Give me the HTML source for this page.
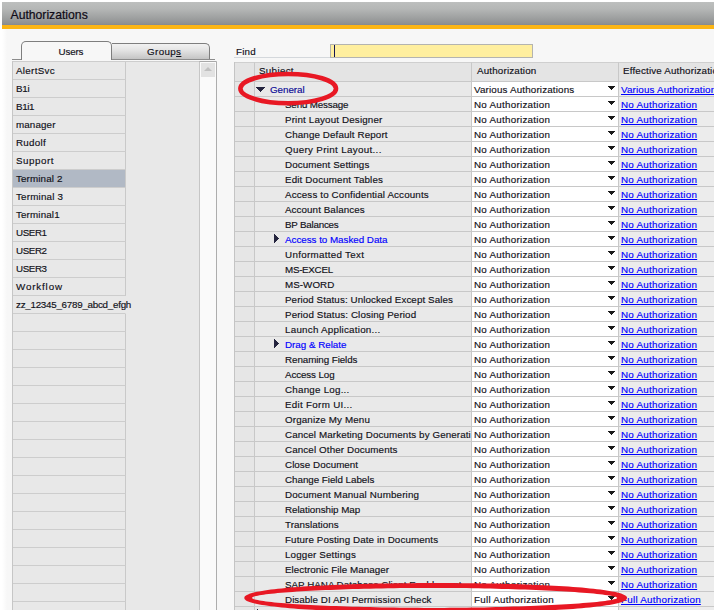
<!DOCTYPE html>
<html><head><meta charset="utf-8"><title>Authorizations</title>
<style>
html,body{margin:0;padding:0;}
body{width:714px;height:610px;overflow:hidden;background:#fff;position:relative;font-family:"Liberation Sans",sans-serif;font-size:9.8px;color:#101018;}
.abs{position:absolute;}
#win{left:2px;top:2px;width:712px;height:608px;background:#f7f7f7;}
#edge{left:2px;top:29px;width:5px;height:581px;background:linear-gradient(to right,#ffffff,#f7f7f7);}
#title{left:2px;top:2px;width:712px;height:23px;background:linear-gradient(to bottom,#bdbfbe 0%,#b5b7b6 30%,#9fa1a1 68%,#8e9091 94%,#848990 100%);}
#title span{position:absolute;left:8.5px;top:5.5px;font-size:12.2px;line-height:14px;color:#0e0a16;-webkit-text-stroke:0.2px;white-space:nowrap;}
#gold{left:2px;top:25px;width:712px;height:4px;background:#fbb515;}
.t{white-space:nowrap;-webkit-text-stroke:0.15px;}
/* tabs */
#tabline{left:12px;top:59px;width:203px;height:1px;background:#8c8c8c;}
#tab1{left:21px;top:41px;width:91px;height:19px;box-sizing:border-box;border:1px solid #7e7e7e;border-bottom:none;border-radius:5px 5px 0 0;background:#f7f7f7;}
#tab1 .t{position:absolute;left:36.5px;top:3px;line-height:13px;}
#tab2{left:112px;top:43px;width:98px;height:16px;box-sizing:border-box;border:1px solid #7e7e7e;border-bottom:none;border-left:none;border-radius:0 5px 0 0;background:linear-gradient(to bottom,#f2f2f2,#e2e2e2 45%,#c4c4c4);}
#tab2 .t{position:absolute;left:35px;top:1px;line-height:13px;}
/* list */
#list{left:12px;top:61px;width:205px;height:549px;box-sizing:border-box;border-left:1px solid #c6c6c6;border-right:1px solid #adadad;border-top:1px solid #cdcdcd;background:#e8e8e8;}
#lcol{left:0;top:0;width:113px;height:549px;}
.u{position:relative;height:17px;width:112px;border-bottom:1px solid #cdcdcd;border-right:1px solid #c9c9c9;line-height:17px;}
.u .t{position:absolute;left:3px;top:0;}
.u.sel{background:#b1b9c5;}
.u.zz{border-right-color:#e8e8e8;}
#track{left:186px;top:-1px;width:16px;height:549px;background:#fafafa;border-left:1px solid #c6c6c6;border-top:1px solid #a8a8a8;}
#sbtn{left:1px;top:1px;width:14px;height:14px;background:#e2e2e2;}
#sbtn:after{content:"";position:absolute;left:3px;top:4px;border-left:4px solid transparent;border-right:4px solid transparent;border-bottom:4px solid #c0c0c0;}
/* find */
#findl{left:236px;top:45px;line-height:13px;}
#findu{left:234px;top:57px;width:96px;height:1px;background:#d4d8dc;}
#findi{left:330px;top:44px;width:203px;height:14px;box-sizing:border-box;background:#ffef9f;border:1px solid #b4b4b0;}
#caret{left:334px;top:45px;width:1.2px;height:12px;background:#141450;}
/* grid */
#grid{left:234px;top:62px;width:480px;height:548px;overflow:hidden;background:#e9e9e9;border-left:1px solid #c4c4c4;box-sizing:border-box;}
.r{position:absolute;left:0;width:480px;height:15px;}
.c{position:absolute;top:0;height:14px;border-bottom:1px solid #c8c8c8;border-right:1px solid #c8c8c8;line-height:14px;overflow:hidden;box-sizing:content-box;}
.c0{left:0;width:19px;background:#e6e6e6;}
.c1{left:20px;width:216px;background:#e9e9e9;}
.c2{left:237px;width:146px;background:#fff;}
.c3{left:384px;width:100px;background:#ececec;border-right:none;}
.c1 .t{position:absolute;left:30px;top:1px;}
.c2 .t{position:absolute;left:2px;top:1px;}
.c3 .t{position:absolute;left:2px;top:1px;color:#0000ff;text-decoration:underline;}
.dd{position:absolute;left:136px;top:4px;width:7px;height:4px;display:block;}
.hd .c{height:18px;line-height:16px;background:#e4e4e4;border-top:1px solid #cfcfcf;}
.hd .c .t{position:absolute;top:0;}
.tri-r{position:absolute;left:19px;top:2px;width:5px;height:9px;display:block;}
.tri-d{position:absolute;left:1px;top:5px;width:9px;height:5px;display:block;}
</style></head><body>
<div id="win" class="abs"></div>
<div id="edge" class="abs"></div>
<div id="title" class="abs"><span>Authorizations</span></div>
<div id="gold" class="abs"></div>
<div id="tabline" class="abs"></div>
<div id="tab1" class="abs"><span class="t" style="letter-spacing:-0.148px;">Users</span></div>
<div id="tab2" class="abs"><span class="t" style="letter-spacing:0.372px">Group<u>s</u></span></div>
<div id="list" class="abs">
<div id="lcol" class="abs">
<div class="u"><span class="t" style="letter-spacing:0.317px;">AlertSvc</span></div>
<div class="u"><span class="t" style="letter-spacing:-0.186px;">B1i</span></div>
<div class="u"><span class="t" style="letter-spacing:-0.37px;">B1i1</span></div>
<div class="u"><span class="t" style="letter-spacing:0.121px;">manager</span></div>
<div class="u"><span class="t" style="letter-spacing:0.294px;">Rudolf</span></div>
<div class="u"><span class="t" style="letter-spacing:0.545px;">Support</span></div>
<div class="u sel"><span class="t" style="letter-spacing:0.133px;">Terminal 2</span></div>
<div class="u"><span class="t" style="letter-spacing:0.2px;">Terminal 3</span></div>
<div class="u"><span class="t" style="letter-spacing:0.139px;">Terminal1</span></div>
<div class="u"><span class="t" style="letter-spacing:-0.418px;">USER1</span></div>
<div class="u"><span class="t" style="letter-spacing:-0.418px;">USER2</span></div>
<div class="u"><span class="t" style="letter-spacing:-0.418px;">USER3</span></div>
<div class="u"><span class="t" style="letter-spacing:0.842px;">Workflow</span></div>
<div class="u zz"><span class="t" style="letter-spacing:-0.257px;">zz_12345_6789_abcd_efgh</span></div>
<div class="u"></div>
<div class="u"></div>
<div class="u"></div>
<div class="u"></div>
<div class="u"></div>
<div class="u"></div>
<div class="u"></div>
<div class="u"></div>
<div class="u"></div>
<div class="u"></div>
<div class="u"></div>
<div class="u"></div>
<div class="u"></div>
<div class="u"></div>
<div class="u"></div>
<div class="u"></div>
<div class="u"></div>
</div>
<div id="track" class="abs"><div id="sbtn" class="abs"></div></div>
</div>
<div id="findl" class="abs"><span class="t" style="letter-spacing:0.212px;">Find</span></div>
<div id="findu" class="abs"></div>
<div id="findi" class="abs"></div>
<div id="caret" class="abs"></div>
<div id="grid" class="abs">
<div class="r hd" style="top:0;height:20px"><div class="c c0"></div><div class="c c1"><span class="t" style="letter-spacing:0.319px;left:4px;">Subject</span></div><div class="c c2" style="background:#e4e4e4"><span class="t" style="letter-spacing:0.176px;left:5px;">Authorization</span></div><div class="c c3" style="background:#e4e4e4"><span class="t" style="letter-spacing:0.17px;left:4px;color:inherit;text-decoration:none;">Effective Authorization</span></div></div>
<div class="r" style="top:20px"><div class="c c0"></div><div class="c c1"><svg class="tri-d" viewBox="0 0 9 5"><polygon points="0,0 9,0 4.5,5" fill="#24243e" shape-rendering="crispEdges"/></svg><span class="t" style="letter-spacing:-0.027px;left:15px;color:#0a0a96;">General</span></div><div class="c c2"><span class="t" style="letter-spacing:0.164px;">Various Authorizations</span><svg class="dd" viewBox="0 0 7 4"><polygon points="0,0 7,0 3.5,4" fill="#1a1a1a" shape-rendering="crispEdges"/></svg></div><div class="c c3"><span class="t" style="letter-spacing:0.164px;">Various Authorizations</span></div></div>
<div class="r" style="top:35px"><div class="c c0"></div><div class="c c1"><span class="t" style="letter-spacing:-0.169px;">Send Message</span></div><div class="c c2"><span class="t" style="letter-spacing:0.267px;">No Authorization</span><svg class="dd" viewBox="0 0 7 4"><polygon points="0,0 7,0 3.5,4" fill="#1a1a1a" shape-rendering="crispEdges"/></svg></div><div class="c c3"><span class="t" style="letter-spacing:0.267px;">No Authorization</span></div></div>
<div class="r" style="top:50px"><div class="c c0"></div><div class="c c1"><span class="t" style="letter-spacing:0.154px;">Print Layout Designer</span></div><div class="c c2"><span class="t" style="letter-spacing:0.267px;">No Authorization</span><svg class="dd" viewBox="0 0 7 4"><polygon points="0,0 7,0 3.5,4" fill="#1a1a1a" shape-rendering="crispEdges"/></svg></div><div class="c c3"><span class="t" style="letter-spacing:0.267px;">No Authorization</span></div></div>
<div class="r" style="top:65px"><div class="c c0"></div><div class="c c1"><span class="t" style="letter-spacing:0.114px;">Change Default Report</span></div><div class="c c2"><span class="t" style="letter-spacing:0.267px;">No Authorization</span><svg class="dd" viewBox="0 0 7 4"><polygon points="0,0 7,0 3.5,4" fill="#1a1a1a" shape-rendering="crispEdges"/></svg></div><div class="c c3"><span class="t" style="letter-spacing:0.267px;">No Authorization</span></div></div>
<div class="r" style="top:80px"><div class="c c0"></div><div class="c c1"><span class="t" style="letter-spacing:0.327px;">Query Print Layout...</span></div><div class="c c2"><span class="t" style="letter-spacing:0.267px;">No Authorization</span><svg class="dd" viewBox="0 0 7 4"><polygon points="0,0 7,0 3.5,4" fill="#1a1a1a" shape-rendering="crispEdges"/></svg></div><div class="c c3"><span class="t" style="letter-spacing:0.267px;">No Authorization</span></div></div>
<div class="r" style="top:95px"><div class="c c0"></div><div class="c c1"><span class="t" style="letter-spacing:0.095px;">Document Settings</span></div><div class="c c2"><span class="t" style="letter-spacing:0.267px;">No Authorization</span><svg class="dd" viewBox="0 0 7 4"><polygon points="0,0 7,0 3.5,4" fill="#1a1a1a" shape-rendering="crispEdges"/></svg></div><div class="c c3"><span class="t" style="letter-spacing:0.267px;">No Authorization</span></div></div>
<div class="r" style="top:110px"><div class="c c0"></div><div class="c c1"><span class="t" style="letter-spacing:0.146px;">Edit Document Tables</span></div><div class="c c2"><span class="t" style="letter-spacing:0.267px;">No Authorization</span><svg class="dd" viewBox="0 0 7 4"><polygon points="0,0 7,0 3.5,4" fill="#1a1a1a" shape-rendering="crispEdges"/></svg></div><div class="c c3"><span class="t" style="letter-spacing:0.267px;">No Authorization</span></div></div>
<div class="r" style="top:125px"><div class="c c0"></div><div class="c c1"><span class="t" style="letter-spacing:0.143px;">Access to Confidential Accounts</span></div><div class="c c2"><span class="t" style="letter-spacing:0.267px;">No Authorization</span><svg class="dd" viewBox="0 0 7 4"><polygon points="0,0 7,0 3.5,4" fill="#1a1a1a" shape-rendering="crispEdges"/></svg></div><div class="c c3"><span class="t" style="letter-spacing:0.267px;">No Authorization</span></div></div>
<div class="r" style="top:140px"><div class="c c0"></div><div class="c c1"><span class="t" style="letter-spacing:0.078px;">Account Balances</span></div><div class="c c2"><span class="t" style="letter-spacing:0.267px;">No Authorization</span><svg class="dd" viewBox="0 0 7 4"><polygon points="0,0 7,0 3.5,4" fill="#1a1a1a" shape-rendering="crispEdges"/></svg></div><div class="c c3"><span class="t" style="letter-spacing:0.267px;">No Authorization</span></div></div>
<div class="r" style="top:155px"><div class="c c0"></div><div class="c c1"><span class="t" style="letter-spacing:-0.222px;">BP Balances</span></div><div class="c c2"><span class="t" style="letter-spacing:0.267px;">No Authorization</span><svg class="dd" viewBox="0 0 7 4"><polygon points="0,0 7,0 3.5,4" fill="#1a1a1a" shape-rendering="crispEdges"/></svg></div><div class="c c3"><span class="t" style="letter-spacing:0.267px;">No Authorization</span></div></div>
<div class="r" style="top:170px"><div class="c c0"></div><div class="c c1"><svg class="tri-r" viewBox="0 0 5 9"><polygon points="0,0 5,4.5 0,9" fill="#24243e" shape-rendering="crispEdges"/></svg><span class="t" style="letter-spacing:-0.021px;color:#0000ff;">Access to Masked Data</span></div><div class="c c2"><span class="t" style="letter-spacing:0.267px;">No Authorization</span><svg class="dd" viewBox="0 0 7 4"><polygon points="0,0 7,0 3.5,4" fill="#1a1a1a" shape-rendering="crispEdges"/></svg></div><div class="c c3"><span class="t" style="letter-spacing:0.267px;">No Authorization</span></div></div>
<div class="r" style="top:185px"><div class="c c0"></div><div class="c c1"><span class="t" style="letter-spacing:0.305px;">Unformatted Text</span></div><div class="c c2"><span class="t" style="letter-spacing:0.267px;">No Authorization</span><svg class="dd" viewBox="0 0 7 4"><polygon points="0,0 7,0 3.5,4" fill="#1a1a1a" shape-rendering="crispEdges"/></svg></div><div class="c c3"><span class="t" style="letter-spacing:0.267px;">No Authorization</span></div></div>
<div class="r" style="top:200px"><div class="c c0"></div><div class="c c1"><span class="t" style="letter-spacing:-0.285px;">MS-EXCEL</span></div><div class="c c2"><span class="t" style="letter-spacing:0.267px;">No Authorization</span><svg class="dd" viewBox="0 0 7 4"><polygon points="0,0 7,0 3.5,4" fill="#1a1a1a" shape-rendering="crispEdges"/></svg></div><div class="c c3"><span class="t" style="letter-spacing:0.267px;">No Authorization</span></div></div>
<div class="r" style="top:215px"><div class="c c0"></div><div class="c c1"><span class="t" style="letter-spacing:0.053px;">MS-WORD</span></div><div class="c c2"><span class="t" style="letter-spacing:0.267px;">No Authorization</span><svg class="dd" viewBox="0 0 7 4"><polygon points="0,0 7,0 3.5,4" fill="#1a1a1a" shape-rendering="crispEdges"/></svg></div><div class="c c3"><span class="t" style="letter-spacing:0.267px;">No Authorization</span></div></div>
<div class="r" style="top:230px"><div class="c c0"></div><div class="c c1"><span class="t" style="letter-spacing:0.082px;">Period Status: Unlocked Except Sales</span></div><div class="c c2"><span class="t" style="letter-spacing:0.267px;">No Authorization</span><svg class="dd" viewBox="0 0 7 4"><polygon points="0,0 7,0 3.5,4" fill="#1a1a1a" shape-rendering="crispEdges"/></svg></div><div class="c c3"><span class="t" style="letter-spacing:0.267px;">No Authorization</span></div></div>
<div class="r" style="top:245px"><div class="c c0"></div><div class="c c1"><span class="t" style="letter-spacing:0.111px;">Period Status: Closing Period</span></div><div class="c c2"><span class="t" style="letter-spacing:0.267px;">No Authorization</span><svg class="dd" viewBox="0 0 7 4"><polygon points="0,0 7,0 3.5,4" fill="#1a1a1a" shape-rendering="crispEdges"/></svg></div><div class="c c3"><span class="t" style="letter-spacing:0.267px;">No Authorization</span></div></div>
<div class="r" style="top:260px"><div class="c c0"></div><div class="c c1"><span class="t" style="letter-spacing:0.239px;">Launch Application...</span></div><div class="c c2"><span class="t" style="letter-spacing:0.267px;">No Authorization</span><svg class="dd" viewBox="0 0 7 4"><polygon points="0,0 7,0 3.5,4" fill="#1a1a1a" shape-rendering="crispEdges"/></svg></div><div class="c c3"><span class="t" style="letter-spacing:0.267px;">No Authorization</span></div></div>
<div class="r" style="top:275px"><div class="c c0"></div><div class="c c1"><svg class="tri-r" viewBox="0 0 5 9"><polygon points="0,0 5,4.5 0,9" fill="#24243e" shape-rendering="crispEdges"/></svg><span class="t" style="letter-spacing:-0.012px;color:#0000ff;">Drag &amp; Relate</span></div><div class="c c2"><span class="t" style="letter-spacing:0.267px;">No Authorization</span><svg class="dd" viewBox="0 0 7 4"><polygon points="0,0 7,0 3.5,4" fill="#1a1a1a" shape-rendering="crispEdges"/></svg></div><div class="c c3"><span class="t" style="letter-spacing:0.267px;">No Authorization</span></div></div>
<div class="r" style="top:290px"><div class="c c0"></div><div class="c c1"><span class="t" style="letter-spacing:-0.073px;">Renaming Fields</span></div><div class="c c2"><span class="t" style="letter-spacing:0.267px;">No Authorization</span><svg class="dd" viewBox="0 0 7 4"><polygon points="0,0 7,0 3.5,4" fill="#1a1a1a" shape-rendering="crispEdges"/></svg></div><div class="c c3"><span class="t" style="letter-spacing:0.267px;">No Authorization</span></div></div>
<div class="r" style="top:305px"><div class="c c0"></div><div class="c c1"><span class="t" style="letter-spacing:-0.117px;">Access Log</span></div><div class="c c2"><span class="t" style="letter-spacing:0.267px;">No Authorization</span><svg class="dd" viewBox="0 0 7 4"><polygon points="0,0 7,0 3.5,4" fill="#1a1a1a" shape-rendering="crispEdges"/></svg></div><div class="c c3"><span class="t" style="letter-spacing:0.267px;">No Authorization</span></div></div>
<div class="r" style="top:320px"><div class="c c0"></div><div class="c c1"><span class="t" style="letter-spacing:0.228px;">Change Log...</span></div><div class="c c2"><span class="t" style="letter-spacing:0.267px;">No Authorization</span><svg class="dd" viewBox="0 0 7 4"><polygon points="0,0 7,0 3.5,4" fill="#1a1a1a" shape-rendering="crispEdges"/></svg></div><div class="c c3"><span class="t" style="letter-spacing:0.267px;">No Authorization</span></div></div>
<div class="r" style="top:335px"><div class="c c0"></div><div class="c c1"><span class="t" style="letter-spacing:0.296px;">Edit Form UI...</span></div><div class="c c2"><span class="t" style="letter-spacing:0.267px;">No Authorization</span><svg class="dd" viewBox="0 0 7 4"><polygon points="0,0 7,0 3.5,4" fill="#1a1a1a" shape-rendering="crispEdges"/></svg></div><div class="c c3"><span class="t" style="letter-spacing:0.267px;">No Authorization</span></div></div>
<div class="r" style="top:350px"><div class="c c0"></div><div class="c c1"><span class="t" style="letter-spacing:0.142px;">Organize My Menu</span></div><div class="c c2"><span class="t" style="letter-spacing:0.267px;">No Authorization</span><svg class="dd" viewBox="0 0 7 4"><polygon points="0,0 7,0 3.5,4" fill="#1a1a1a" shape-rendering="crispEdges"/></svg></div><div class="c c3"><span class="t" style="letter-spacing:0.267px;">No Authorization</span></div></div>
<div class="r" style="top:365px"><div class="c c0"></div><div class="c c1"><span class="t" style="letter-spacing:0.106px;">Cancel Marketing Documents by Generati</span></div><div class="c c2"><span class="t" style="letter-spacing:0.267px;">No Authorization</span><svg class="dd" viewBox="0 0 7 4"><polygon points="0,0 7,0 3.5,4" fill="#1a1a1a" shape-rendering="crispEdges"/></svg></div><div class="c c3"><span class="t" style="letter-spacing:0.267px;">No Authorization</span></div></div>
<div class="r" style="top:380px"><div class="c c0"></div><div class="c c1"><span class="t" style="letter-spacing:0.119px;">Cancel Other Documents</span></div><div class="c c2"><span class="t" style="letter-spacing:0.267px;">No Authorization</span><svg class="dd" viewBox="0 0 7 4"><polygon points="0,0 7,0 3.5,4" fill="#1a1a1a" shape-rendering="crispEdges"/></svg></div><div class="c c3"><span class="t" style="letter-spacing:0.267px;">No Authorization</span></div></div>
<div class="r" style="top:395px"><div class="c c0"></div><div class="c c1"><span class="t" style="letter-spacing:0.052px;">Close Document</span></div><div class="c c2"><span class="t" style="letter-spacing:0.267px;">No Authorization</span><svg class="dd" viewBox="0 0 7 4"><polygon points="0,0 7,0 3.5,4" fill="#1a1a1a" shape-rendering="crispEdges"/></svg></div><div class="c c3"><span class="t" style="letter-spacing:0.267px;">No Authorization</span></div></div>
<div class="r" style="top:410px"><div class="c c0"></div><div class="c c1"><span class="t" style="letter-spacing:-0.032px;">Change Field Labels</span></div><div class="c c2"><span class="t" style="letter-spacing:0.267px;">No Authorization</span><svg class="dd" viewBox="0 0 7 4"><polygon points="0,0 7,0 3.5,4" fill="#1a1a1a" shape-rendering="crispEdges"/></svg></div><div class="c c3"><span class="t" style="letter-spacing:0.267px;">No Authorization</span></div></div>
<div class="r" style="top:425px"><div class="c c0"></div><div class="c c1"><span class="t" style="letter-spacing:0.16px;">Document Manual Numbering</span></div><div class="c c2"><span class="t" style="letter-spacing:0.267px;">No Authorization</span><svg class="dd" viewBox="0 0 7 4"><polygon points="0,0 7,0 3.5,4" fill="#1a1a1a" shape-rendering="crispEdges"/></svg></div><div class="c c3"><span class="t" style="letter-spacing:0.267px;">No Authorization</span></div></div>
<div class="r" style="top:440px"><div class="c c0"></div><div class="c c1"><span class="t" style="letter-spacing:-0.034px;">Relationship Map</span></div><div class="c c2"><span class="t" style="letter-spacing:0.267px;">No Authorization</span><svg class="dd" viewBox="0 0 7 4"><polygon points="0,0 7,0 3.5,4" fill="#1a1a1a" shape-rendering="crispEdges"/></svg></div><div class="c c3"><span class="t" style="letter-spacing:0.267px;">No Authorization</span></div></div>
<div class="r" style="top:455px"><div class="c c0"></div><div class="c c1"><span class="t" style="letter-spacing:0.064px;">Translations</span></div><div class="c c2"><span class="t" style="letter-spacing:0.267px;">No Authorization</span><svg class="dd" viewBox="0 0 7 4"><polygon points="0,0 7,0 3.5,4" fill="#1a1a1a" shape-rendering="crispEdges"/></svg></div><div class="c c3"><span class="t" style="letter-spacing:0.267px;">No Authorization</span></div></div>
<div class="r" style="top:470px"><div class="c c0"></div><div class="c c1"><span class="t" style="letter-spacing:0.108px;">Future Posting Date in Documents</span></div><div class="c c2"><span class="t" style="letter-spacing:0.267px;">No Authorization</span><svg class="dd" viewBox="0 0 7 4"><polygon points="0,0 7,0 3.5,4" fill="#1a1a1a" shape-rendering="crispEdges"/></svg></div><div class="c c3"><span class="t" style="letter-spacing:0.267px;">No Authorization</span></div></div>
<div class="r" style="top:485px"><div class="c c0"></div><div class="c c1"><span class="t" style="letter-spacing:0.154px;">Logger Settings</span></div><div class="c c2"><span class="t" style="letter-spacing:0.267px;">No Authorization</span><svg class="dd" viewBox="0 0 7 4"><polygon points="0,0 7,0 3.5,4" fill="#1a1a1a" shape-rendering="crispEdges"/></svg></div><div class="c c3"><span class="t" style="letter-spacing:0.267px;">No Authorization</span></div></div>
<div class="r" style="top:500px"><div class="c c0"></div><div class="c c1"><span class="t" style="letter-spacing:0.049px;">Electronic File Manager</span></div><div class="c c2"><span class="t" style="letter-spacing:0.267px;">No Authorization</span><svg class="dd" viewBox="0 0 7 4"><polygon points="0,0 7,0 3.5,4" fill="#1a1a1a" shape-rendering="crispEdges"/></svg></div><div class="c c3"><span class="t" style="letter-spacing:0.267px;">No Authorization</span></div></div>
<div class="r" style="top:515px"><div class="c c0"></div><div class="c c1"><span class="t" style="letter-spacing:0.007px;">SAP HANA Database Client Enablement</span></div><div class="c c2"><span class="t" style="letter-spacing:0.267px;">No Authorization</span><svg class="dd" viewBox="0 0 7 4"><polygon points="0,0 7,0 3.5,4" fill="#1a1a1a" shape-rendering="crispEdges"/></svg></div><div class="c c3"><span class="t" style="letter-spacing:0.267px;">No Authorization</span></div></div>
<div class="r" style="top:530px"><div class="c c0"></div><div class="c c1"><span class="t" style="letter-spacing:0.055px;">Disable DI API Permission Check</span></div><div class="c c2"><span class="t" style="letter-spacing:0.261px;">Full Authorization</span><svg class="dd" viewBox="0 0 7 4"><polygon points="0,0 7,0 3.5,4" fill="#1a1a1a" shape-rendering="crispEdges"/></svg></div><div class="c c3"><span class="t" style="letter-spacing:0.261px;">Full Authorization</span></div></div>
<div class="r" style="top:545px"><div class="c c0"></div><div class="c c1"><svg class="tri-r" style="left:2px" viewBox="0 0 5 9"><polygon points="0,0 5,4.5 0,9" fill="#24243e" shape-rendering="crispEdges"/></svg></div><div class="c c2"></div><div class="c c3"></div></div>
</div>
<svg class="abs" style="left:0;top:0" width="714" height="610" viewBox="0 0 714 610">
<ellipse cx="288.2" cy="88.6" rx="47.8" ry="14.6" fill="none" stroke="#e81824" stroke-width="4.6"/>
<path fill="#e81824" fill-rule="evenodd" d="M627.0,597.9 L626.9,598.6 L626.6,599.2 L626.0,599.8 L625.3,600.4 L624.4,600.9 L623.2,601.4 L621.8,602.0 L620.3,602.5 L618.5,603.0 L616.5,603.5 L614.3,604.0 L611.9,604.4 L609.3,604.9 L606.5,605.3 L603.6,605.8 L600.4,606.2 L597.0,606.6 L593.5,607.0 L589.8,607.4 L585.9,607.8 L581.8,608.2 L577.5,608.5 L573.1,608.9 L568.5,609.2 L563.7,609.5 L558.8,609.8 L553.7,610.1 L548.5,610.4 L543.1,610.6 L537.6,610.9 L532.0,611.1 L526.1,611.3 L520.2,611.5 L514.1,611.7 L507.9,611.9 L501.5,612.0 L495.1,612.2 L488.4,612.3 L481.7,612.4 L474.7,612.5 L467.6,612.6 L460.3,612.6 L452.8,612.7 L444.9,612.7 L435.8,612.7 L426.7,612.7 L418.8,612.7 L411.2,612.6 L403.9,612.6 L396.8,612.5 L389.9,612.4 L383.1,612.3 L376.5,612.2 L370.0,612.0 L363.6,611.9 L357.4,611.7 L351.3,611.5 L345.3,611.3 L339.5,611.1 L333.8,610.9 L328.3,610.6 L322.9,610.4 L317.7,610.1 L312.6,609.8 L307.7,609.5 L302.9,609.2 L298.3,608.9 L293.9,608.5 L289.6,608.2 L285.5,607.8 L281.6,607.4 L277.9,607.0 L274.3,606.6 L270.9,606.2 L267.8,605.8 L264.8,605.3 L262.0,604.9 L259.4,604.4 L257.0,604.0 L254.8,603.5 L252.8,603.0 L251.1,602.5 L249.5,602.0 L248.1,601.4 L246.9,600.9 L246.0,600.4 L245.3,599.8 L244.7,599.2 L244.4,598.6 L244.3,597.9 L244.4,597.2 L244.7,596.6 L245.3,596.0 L246.0,595.4 L246.9,594.9 L248.1,594.4 L249.5,593.8 L251.1,593.3 L252.8,592.8 L254.8,592.3 L257.0,591.8 L259.4,591.4 L262.0,590.9 L264.8,590.5 L267.8,590.0 L270.9,589.6 L274.3,589.2 L277.9,588.8 L281.6,588.4 L285.5,588.0 L289.6,587.6 L293.9,587.3 L298.3,586.9 L302.9,586.6 L307.7,586.3 L312.6,586.0 L317.7,585.7 L322.9,585.4 L328.3,585.2 L333.8,584.9 L339.5,584.7 L345.3,584.5 L351.3,584.3 L357.4,584.1 L363.6,583.9 L370.0,583.8 L376.5,583.6 L383.1,583.5 L389.9,583.4 L396.8,583.3 L403.9,583.2 L411.2,583.2 L418.8,583.1 L426.7,583.1 L435.8,583.1 L444.9,583.1 L452.8,583.1 L460.3,583.2 L467.6,583.2 L474.7,583.3 L481.7,583.4 L488.4,583.5 L495.1,583.6 L501.5,583.8 L507.9,583.9 L514.1,584.1 L520.2,584.3 L526.1,584.5 L532.0,584.7 L537.6,584.9 L543.1,585.2 L548.5,585.4 L553.7,585.7 L558.8,586.0 L563.7,586.3 L568.5,586.6 L573.1,586.9 L577.5,587.3 L581.8,587.6 L585.9,588.0 L589.8,588.4 L593.5,588.8 L597.0,589.2 L600.4,589.6 L603.6,590.0 L606.5,590.5 L609.3,590.9 L611.9,591.4 L614.3,591.8 L616.5,592.3 L618.5,592.8 L620.3,593.3 L621.8,593.8 L623.2,594.4 L624.4,594.9 L625.3,595.4 L626.0,596.0 L626.6,596.6 L626.9,597.2Z M617.2,597.9 L617.1,598.1 L616.7,598.4 L616.1,598.7 L615.2,599.0 L614.1,599.3 L612.8,599.6 L611.2,600.0 L609.4,600.3 L607.3,600.6 L605.0,600.9 L602.5,601.3 L599.8,601.6 L596.8,601.9 L593.7,602.2 L590.3,602.5 L586.7,602.8 L582.9,603.1 L579.0,603.4 L574.8,603.7 L570.5,604.0 L566.0,604.3 L561.4,604.6 L556.5,604.8 L551.6,605.1 L546.5,605.3 L541.3,605.6 L536.0,605.8 L530.5,606.0 L525.0,606.2 L519.3,606.4 L513.6,606.6 L507.9,606.8 L502.1,606.9 L496.2,607.1 L490.3,607.2 L484.4,607.4 L478.5,607.5 L472.6,607.6 L466.8,607.7 L461.0,607.7 L455.4,607.8 L449.8,607.8 L444.5,607.9 L439.4,607.9 L435.0,607.9 L429.6,607.9 L423.9,607.9 L418.0,607.8 L412.0,607.8 L406.0,607.7 L400.0,607.7 L393.9,607.6 L387.9,607.5 L381.8,607.4 L375.8,607.3 L369.9,607.1 L364.0,607.0 L358.2,606.8 L352.4,606.7 L346.8,606.5 L341.2,606.3 L335.8,606.1 L330.4,605.9 L325.2,605.7 L320.1,605.5 L315.1,605.2 L310.3,605.0 L305.6,604.7 L301.1,604.5 L296.8,604.2 L292.6,603.9 L288.6,603.6 L284.8,603.3 L281.1,603.0 L277.7,602.7 L274.5,602.4 L271.4,602.1 L268.6,601.8 L266.0,601.5 L263.6,601.1 L261.4,600.8 L259.5,600.5 L257.7,600.1 L256.2,599.8 L254.9,599.5 L253.9,599.2 L253.1,598.8 L252.5,598.5 L252.1,598.2 L252.0,597.9 L252.1,597.6 L252.5,597.3 L253.1,597.0 L253.9,596.6 L254.9,596.3 L256.2,596.0 L257.7,595.7 L259.5,595.3 L261.4,595.0 L263.6,594.7 L266.0,594.3 L268.6,594.0 L271.4,593.7 L274.5,593.4 L277.7,593.1 L281.1,592.8 L284.8,592.5 L288.6,592.2 L292.6,591.9 L296.8,591.6 L301.1,591.3 L305.6,591.1 L310.3,590.8 L315.1,590.6 L320.1,590.3 L325.2,590.1 L330.4,589.9 L335.8,589.7 L341.2,589.5 L346.8,589.3 L352.4,589.1 L358.2,589.0 L364.0,588.8 L369.9,588.7 L375.8,588.5 L381.8,588.4 L387.9,588.3 L393.9,588.2 L400.0,588.1 L406.0,588.1 L412.0,588.0 L418.0,588.0 L423.9,587.9 L429.6,587.9 L435.0,587.9 L439.4,587.9 L444.5,587.9 L449.8,588.0 L455.4,588.0 L461.0,588.1 L466.8,588.1 L472.6,588.2 L478.5,588.3 L484.4,588.4 L490.3,588.6 L496.2,588.7 L502.1,588.9 L507.9,589.0 L513.6,589.2 L519.3,589.4 L525.0,589.6 L530.5,589.8 L536.0,590.0 L541.3,590.2 L546.5,590.5 L551.6,590.7 L556.5,591.0 L561.4,591.2 L566.0,591.5 L570.5,591.8 L574.8,592.1 L579.0,592.4 L582.9,592.7 L586.7,593.0 L590.3,593.3 L593.7,593.6 L596.8,593.9 L599.8,594.2 L602.5,594.5 L605.0,594.9 L607.3,595.2 L609.4,595.5 L611.2,595.8 L612.8,596.2 L614.1,596.5 L615.2,596.8 L616.1,597.1 L616.7,597.4 L617.1,597.7Z"/>
</svg>
</body></html>
